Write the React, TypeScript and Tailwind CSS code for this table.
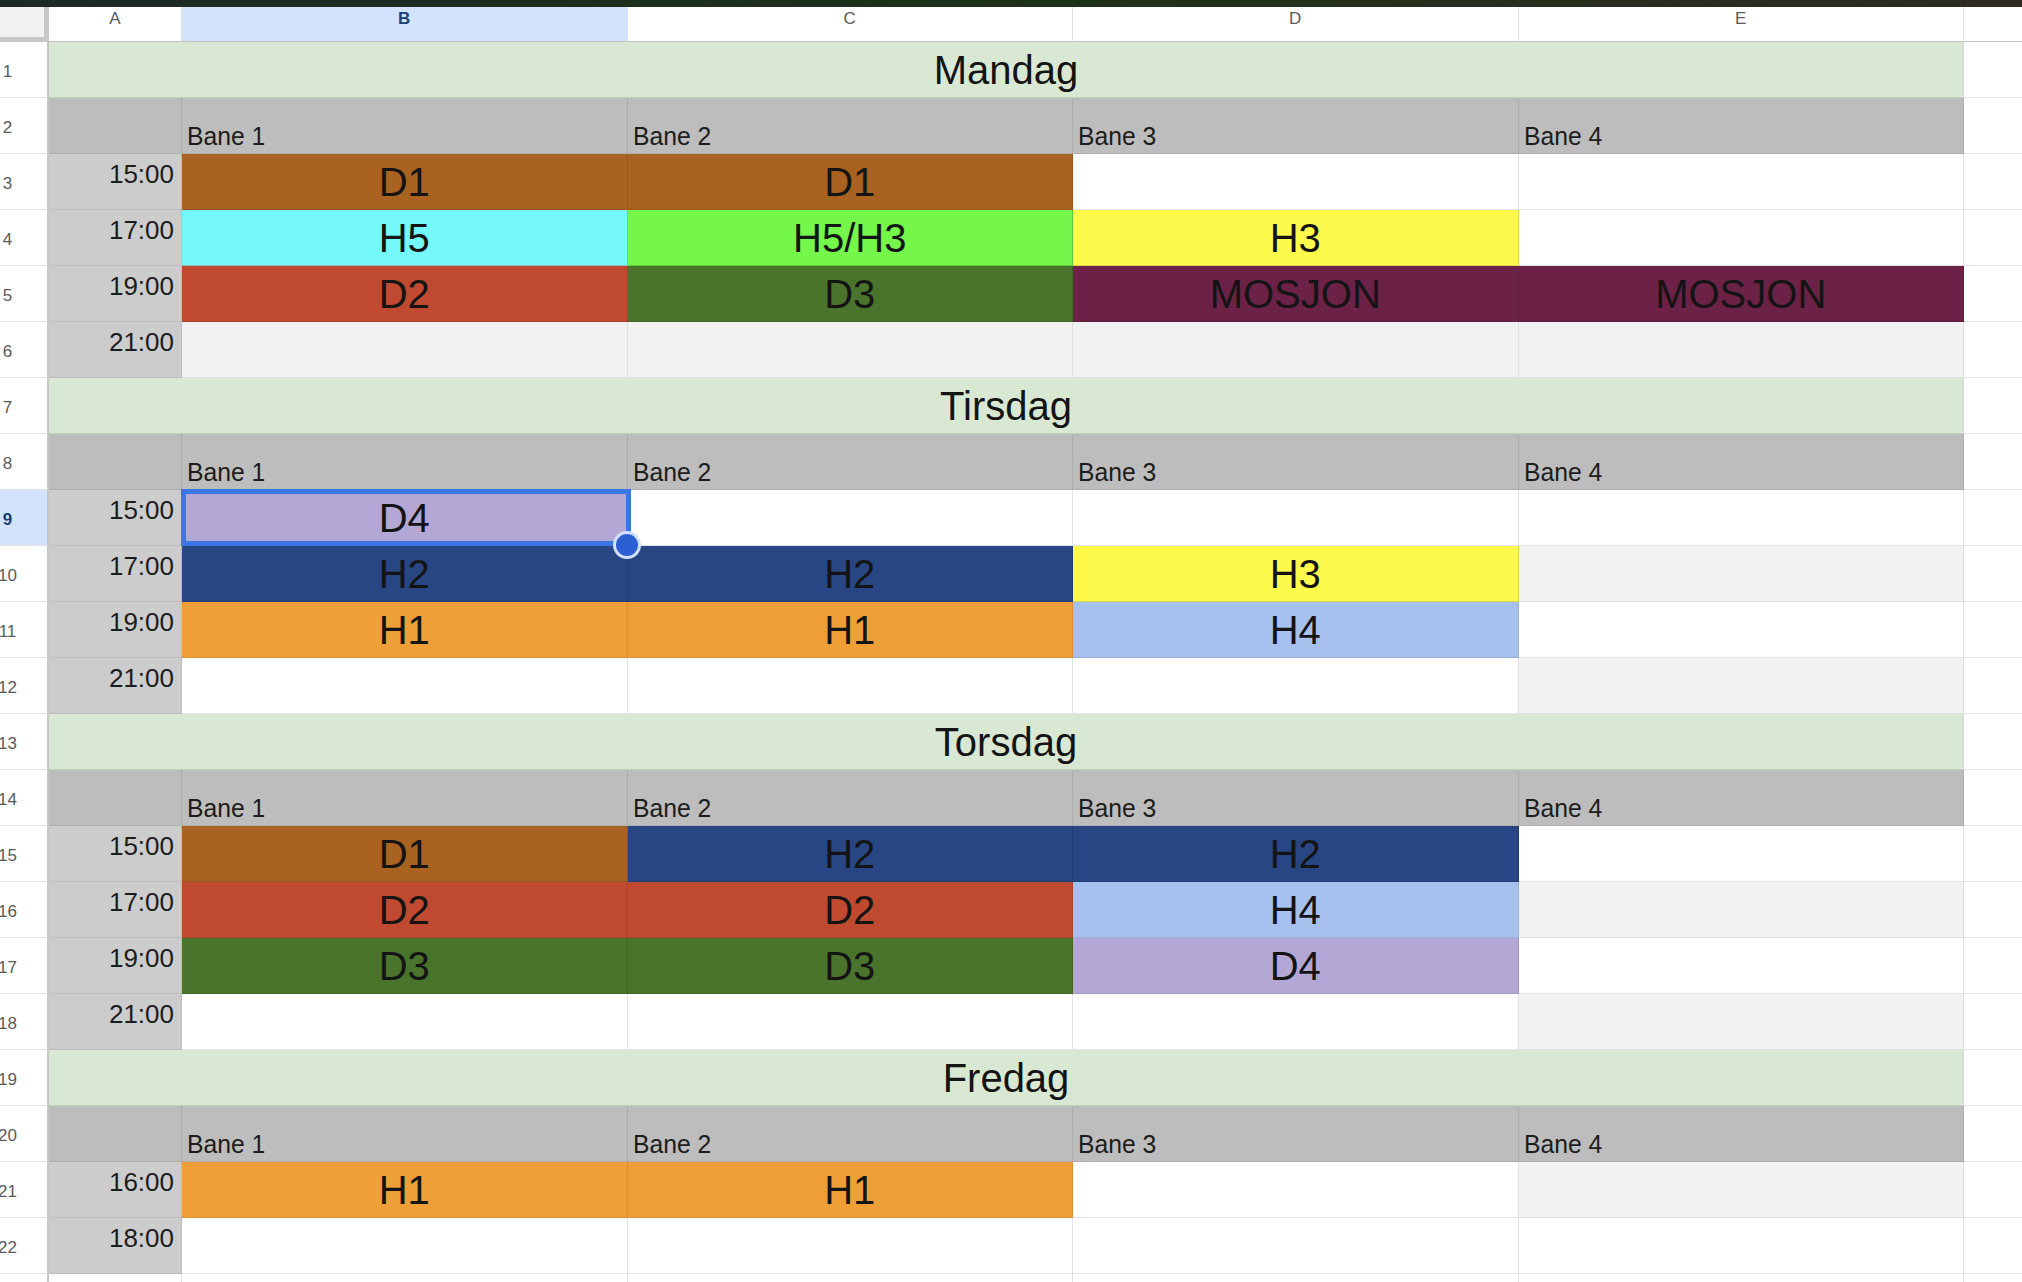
import React from "react";

type Fill =
  | "brown"
  | "cyan"
  | "lime"
  | "yellow"
  | "red"
  | "forest"
  | "plum"
  | "lilac"
  | "navy"
  | "orange"
  | "sky"
  | "white"
  | "gray";

const fills: Record<Fill, string> = {
  brown: "bg-[#a9621f] border-[#96561c]",
  cyan: "bg-[#74f8f9] border-[#8fb9b9]",
  lime: "bg-[#74f64a] border-[#63c842]",
  yellow: "bg-[#fdfa4c] border-[#d8d54a]",
  red: "bg-[#bf4a2f] border-[#a8442e]",
  forest: "bg-[#4a742c] border-[#416628]",
  plum: "bg-[#6c2146] border-[#5f1f3e]",
  lilac: "bg-[#b3a7d5] border-[#a296c2]",
  navy: "bg-[#284683] border-[#223d73]",
  orange: "bg-[#ef9f37] border-[#d98f33]",
  sky: "bg-[#a7c1ef] border-[#96aed8]",
  white: "bg-white border-[#e2e2e2]",
  gray: "bg-[#f2f2f2] border-[#e0e0e0]",
};

type Slot = { time: string; cells: [Fill, string][] };
type Day = { name: string; slots: Slot[] };

const days: Day[] = [
  {
    name: "Mandag",
    slots: [
      { time: "15:00", cells: [["brown", "D1"], ["brown", "D1"], ["white", ""], ["white", ""]] },
      { time: "17:00", cells: [["cyan", "H5"], ["lime", "H5/H3"], ["yellow", "H3"], ["white", ""]] },
      { time: "19:00", cells: [["red", "D2"], ["forest", "D3"], ["plum", "MOSJON"], ["plum", "MOSJON"]] },
      { time: "21:00", cells: [["gray", ""], ["gray", ""], ["gray", ""], ["gray", ""]] },
    ],
  },
  {
    name: "Tirsdag",
    slots: [
      { time: "15:00", cells: [["lilac", "D4"], ["white", ""], ["white", ""], ["white", ""]] },
      { time: "17:00", cells: [["navy", "H2"], ["navy", "H2"], ["yellow", "H3"], ["gray", ""]] },
      { time: "19:00", cells: [["orange", "H1"], ["orange", "H1"], ["sky", "H4"], ["white", ""]] },
      { time: "21:00", cells: [["white", ""], ["white", ""], ["white", ""], ["gray", ""]] },
    ],
  },
  {
    name: "Torsdag",
    slots: [
      { time: "15:00", cells: [["brown", "D1"], ["navy", "H2"], ["navy", "H2"], ["white", ""]] },
      { time: "17:00", cells: [["red", "D2"], ["red", "D2"], ["sky", "H4"], ["gray", ""]] },
      { time: "19:00", cells: [["forest", "D3"], ["forest", "D3"], ["lilac", "D4"], ["white", ""]] },
      { time: "21:00", cells: [["white", ""], ["white", ""], ["white", ""], ["gray", ""]] },
    ],
  },
  {
    name: "Fredag",
    slots: [
      { time: "16:00", cells: [["orange", "H1"], ["orange", "H1"], ["white", ""], ["gray", ""]] },
      { time: "18:00", cells: [["white", ""], ["white", ""], ["white", ""], ["white", ""]] },
    ],
  },
];

// the selected cell in the sheet (row 9, column B)
const SELECTED_ROW = 9;

function RowNum({ n }: { n: number }) {
  const active = n === SELECTED_ROW;
  return (
    <div
      className={`flex items-center overflow-hidden border-r-2 border-b border-r-[#c6c6c6] border-b-[#e1e1e1] pt-[3px] ${
        active ? "bg-[#d3e3fd] font-bold text-[#1f3f7a]" : "bg-white text-[#5a5a5a]"
      }`}
    >
      <div className="flex w-[15px] shrink-0 justify-center text-[17px] leading-none">{n}</div>
    </div>
  );
}

function Blank() {
  return <div className="border-b border-[#e2e2e2] bg-white" />;
}

function Cell({ fill, text, selected }: { fill: Fill; text: string; selected?: boolean }) {
  return (
    <div
      className={`flex items-end justify-center border-r border-b pb-[7px] ${fills[fill]} ${
        selected ? "relative z-10" : ""
      }`}
    >
      {text && <span className="text-[40px] leading-none text-[#141414]">{text}</span>}
      {selected && (
        <>
          <div className="absolute -top-[1px] -right-[4px] -bottom-[1px] -left-[1px] border-[5px] border-[#3a77e0]" />
          <div className="absolute -right-[14px] -bottom-[14px] h-[28px] w-[28px] rounded-full border-[3px] border-[#d3e2fb] bg-[#2c5fd2]" />
        </>
      )}
    </div>
  );
}

function DayBlock({ day, start }: { day: Day; start: number }) {
  return (
    <>
      {/* day title */}
      <RowNum n={start} />
      <div className="col-span-5 flex items-end justify-center border-r border-b border-r-[#d5d5d5] border-b-[#c3cdbf] bg-[#d9e8d3] pb-[7px] text-[40px] leading-none text-[#141414]">
        {day.name}
      </div>
      <Blank />

      {/* courts header */}
      <RowNum n={start + 1} />
      <div className="border-r border-b border-[#acacac] bg-[#bdbdbd]" />
      {[1, 2, 3, 4].map((i) => (
        <div
          key={i}
          className="flex items-end border-r border-b border-[#acacac] bg-[#bdbdbd] pb-[4px] pl-[5px] text-[26px] leading-none text-[#1c1c1c]"
        >
          <span className="origin-left scale-x-[0.95]">Bane {i}</span>
        </div>
      ))}
      <Blank />

      {/* time slots */}
      {day.slots.map((slot, si) => {
        const row = start + 2 + si;
        return (
          <React.Fragment key={slot.time + si}>
            <RowNum n={row} />
            <div className="flex justify-end border-r border-b border-[#bcbcbc] bg-[#cccccc] pt-[7px] pr-[7px] text-[26px] leading-none text-[#1c1c1c]">
              {slot.time}
            </div>
            {slot.cells.map(([fill, text], ci) => (
              <Cell key={ci} fill={fill} text={text} selected={row === SELECTED_ROW && ci === 0} />
            ))}
            <Blank />
          </React.Fragment>
        );
      })}
    </>
  );
}

export default function App() {
  let start = 1;
  const blocks = days.map((day) => {
    const s = start;
    start += 2 + day.slots.length;
    return <DayBlock key={day.name} day={day} start={s} />;
  });

  return (
    <div className="h-[1282px] w-[2022px] overflow-hidden bg-white font-['Liberation_Sans',Arial,sans-serif]">
      <div className="h-[7px] bg-linear-to-r from-[#1b2a25] via-[#1e3118] to-[#2d2a21]" />
      <div className="grid grid-cols-[49px_133px_repeat(4,445.5px)_1fr] grid-rows-[35px] auto-rows-[56px]">
        {/* column letters */}
        <div className="border-r-[5px] border-b-[5px] border-[#c7c7c7] bg-[#f1f1f1]" />
        {["A", "B", "C", "D", "E"].map((l) => (
          <div
            key={l}
            className={`flex items-start justify-center border-r border-b border-r-[#e0e0e0] border-b-[#c4c4c4] pt-[3px] text-[17px] leading-none ${
              l === "B" ? "bg-[#d3e3fd] font-bold text-[#1f3f7a]" : "bg-white text-[#5a5a5a]"
            }`}
          >
            {l}
          </div>
        ))}
        <div className="border-b border-[#c4c4c4] bg-white" />

        {blocks}

        {/* row 23, cut off at the bottom */}
        <RowNum n={start} />
        <div className="border-r border-b border-[#e2e2e2] bg-white" />
        {[0, 1, 2, 3].map((i) => (
          <Cell key={i} fill="white" text="" />
        ))}
        <Blank />
      </div>
    </div>
  );
}
